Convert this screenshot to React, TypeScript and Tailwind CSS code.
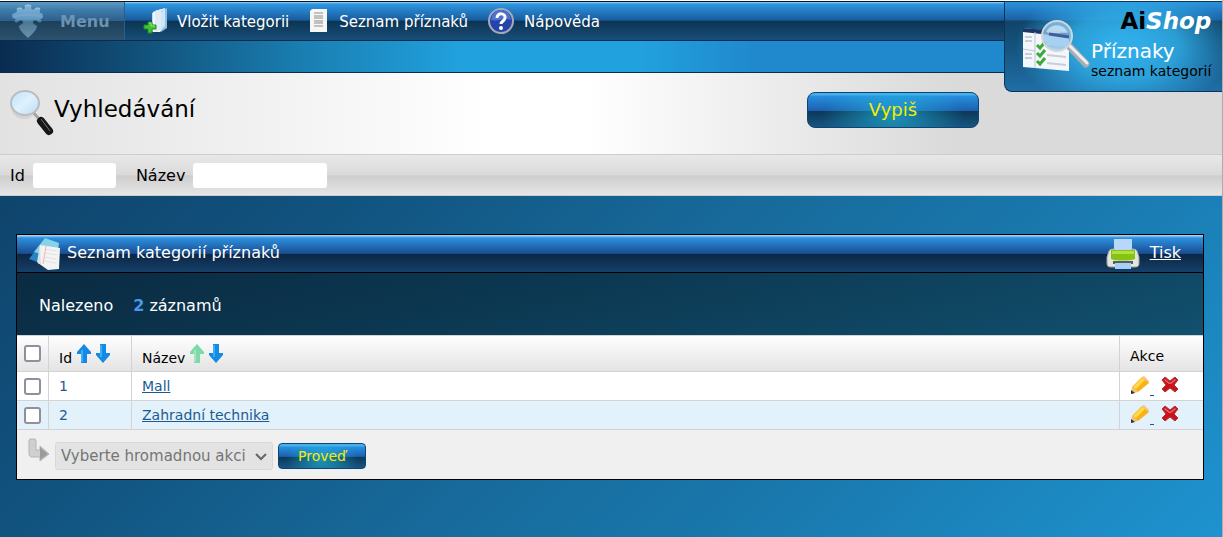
import type { ReactNode } from "react";

const rows = [
  { id: 1, name: "Mall" },
  { id: 2, name: "Zahradní technika" },
];

const glossy =
  "border border-[#0c4572] bg-[radial-gradient(ellipse_42%_100%_at_50%_65%,rgba(34,190,225,0.65),transparent),linear-gradient(to_bottom,#4aaeea_0,#4aaeea_2px,#2590df_3px,#1d5fae_52%,#0b3858_53%,#175582_100%)] text-[#f4ec00] cursor-pointer";

function PuzzleIcon() {
  return (
    <svg width="32" height="34" viewBox="0 0 32 34" className="shrink-0">
      <defs>
        <linearGradient id="puzzle" x1="0" y1="0" x2="0" y2="1">
          <stop offset="0" stopColor="#82b4d6" />
          <stop offset="0.45" stopColor="#6098c0" />
          <stop offset="0.52" stopColor="#4d7693" />
          <stop offset="1" stopColor="#6a92ae" />
        </linearGradient>
      </defs>
      <path
        d="M5 4c2-1 4-1 5 0 1 2 2 2 3 0 0-1-1-2 0-3 2-1 5-1 6 0 1 1 0 2 0 3 1 2 3 2 4 0 2-1 4-1 5 0 1 2-1 4 0 5 2 0 3 1 3 3s-1 3-3 3c1 1 2 2 1 3-2 1-3 0-4-1-1-2-4-1-4 1 0 3 3 2 4 4 0 4-5 8-9 12-4-4-9-8-9-12 1-2 4-1 4-4 0-2-3-3-4-1-1 1-2 2-4 1-1-1 0-2 1-3-2 0-4-1-4-3s1-3 3-3c3-1 1-3 2-5z"
        fill="url(#puzzle)"
      />
      <path d="M5 5c2-1 4-1 5 0M13 2c2-1 4-1 6 0M23 5c2-1 4-1 5 0" fill="none" stroke="#a4cae2" strokeOpacity="0.8" />
      <path d="M2 13c8-3 20-3 28 0" fill="none" stroke="#8bb6d3" strokeOpacity="0.3" strokeWidth="2" />
    </svg>
  );
}

function AddIcon() {
  return (
    <svg width="26" height="28" viewBox="0 0 26 28" className="shrink-0">
      <path d="M9 6l5-3v20l-5 2z" fill="#b9d9ee" />
      <path d="M10 5l12-4v19l-5 5h-7z" fill="#f2f7fb" />
      <path d="M12 4l6-2v21l-6 2z" fill="#dfebf4" />
      <path d="M18 4l6-3v20l-6 4z" fill="#8fbfe4" />
      <path d="M18 5l4-3v17l-4 4z" fill="#cfe5f5" />
      <path d="M5 15h4v3h4v4H9v4H5v-4H1v-4h4z" fill="#45c336" stroke="#1c8f1e" />
      <path d="M6 16h2v3h4" fill="none" stroke="#97e487" />
    </svg>
  );
}

function PageIcon() {
  return (
    <svg width="22" height="26" viewBox="0 0 22 26" className="shrink-0">
      <path d="M3 1h15v23H1V3z" fill="#f6f6f4" />
      <path d="M5 5h9M5 8h9M5 10h9M5 13h9M5 15h9M5 18h9" stroke="#8c8c8c" />
    </svg>
  );
}

function HelpIcon() {
  return (
    <svg width="28" height="28" viewBox="0 0 28 28" className="shrink-0">
      <circle cx="13" cy="14" r="12" fill="#2644a8" stroke="#a3aabb" strokeWidth="2" />
      <path d="M3 13a10 10 0 0 1 20 0c-6-3-13 2-20 0z" fill="#4f72cf" />
      <path d="M9 11c0-6 9-5 8 0 0 3-4 3-4 6" fill="none" stroke="#fff" strokeWidth="3" />
      <circle cx="13" cy="21" r="2" fill="#fff" />
    </svg>
  );
}

function MagnifierIcon() {
  return (
    <svg width="46" height="50" viewBox="0 0 46 50" className="shrink-0">
      <defs>
        <linearGradient id="lens" x1="0" y1="0" x2="1" y2="1">
          <stop offset="0" stopColor="#bfe2fa" />
          <stop offset="0.5" stopColor="#dff1fe" />
          <stop offset="1" stopColor="#b9dcf5" />
        </linearGradient>
      </defs>
      <ellipse cx="16" cy="18" rx="13" ry="12" fill="#c4c4c4" opacity="0.5" />
      <path d="M25 23l6 7" stroke="#a4a4a4" strokeWidth="3" />
      <path d="M33 32l8 10" stroke="#161616" strokeWidth="8" strokeLinecap="round" />
      <path d="M33 30l9 12" stroke="#777" strokeWidth="1" />
      <ellipse cx="17" cy="14" rx="14" ry="12" fill="url(#lens)" stroke="#b9bdc0" strokeWidth="2" />
    </svg>
  );
}

function ChecklistIcon() {
  return (
    <svg width="70" height="56" viewBox="0 0 70 56" className="shrink-0">
      <path d="M2 9l46 5v38L2 48z" fill="#f3f6fb" />
      <path d="M2 9l46 4v5L2 13z" fill="#1e3568" />
      <path d="M14 13v36M2 30l12 2" stroke="#bcc6d8" />
      <path d="M4 18h7M4 22h7M4 35h7M4 39h7M26 27l18 2M26 36l19 2M26 44l19 2" stroke="#c9ced6" strokeWidth="2" />
      <path d="M16 26l3 3 5-6M16 34l3 3 5-6M16 42l3 3 5-6" fill="none" stroke="#3ba935" strokeWidth="3" />
      <path d="M49 28l16 17" stroke="#a9adb3" strokeWidth="7" strokeLinecap="round" />
      <path d="M49 27l17 17" stroke="#eceef0" strokeWidth="3" strokeLinecap="round" />
      <circle cx="36" cy="17" r="15" fill="#8fc4ee" fillOpacity="0.75" stroke="#d3d6d8" strokeWidth="2" />
      <path d="M25 13c6-10 18-8 22 1-8-1-14 2-22-1z" fill="#fff" opacity="0.5" />
      <path d="M28 15l20 3" stroke="#3c5f9e" strokeWidth="3" />
    </svg>
  );
}

function NotesIcon() {
  return (
    <svg width="34" height="34" viewBox="0 0 34 34" className="shrink-0">
      <path d="M1 22L13 6l5 4-6 16z" fill="#2a82c6" />
      <path d="M6 15L17 1l14 5-2 15z" fill="#86d3e7" />
      <path d="M12 8l20 3-1 21-11 1-10-7z" fill="#f4f3f3" />
      <path d="M11 27l-2-2 3-17 1 19z" fill="#dcdfe3" />
      <path d="M17 12l12 2M17 16l12 2M16 20l12 2M16 24l12 2" stroke="#e2e2e6" />
      <path d="M18 9l-3 18" stroke="#efb4b4" />
    </svg>
  );
}

function PrinterIcon() {
  return (
    <svg width="34" height="34" viewBox="0 0 34 34" className="shrink-0">
      <path d="M8 2h18v13H8z" fill="#b7d8fa" />
      <path d="M3 14c1-2 3-2 5-2v3h18v-3c2 0 4 0 5 2l2 6v6c0 3-1 4-4 4H5c-3 0-4-1-4-4v-6z" fill="#e3e5e1" stroke="#9da29b" />
      <path d="M5 13h24v9c-4 2-20 2-24 0z" fill="#85c316" />
      <path d="M6 14h22v3H6z" fill="#b4e03e" />
      <path d="M7 24h20v3H7z" fill="#59605a" />
      <path d="M9 26h16v6H9z" fill="#a8d0f6" />
    </svg>
  );
}

function Arrow({ down, faded }: { down?: boolean; faded?: boolean }) {
  return (
    <svg width="15" height="20" viewBox="0 0 15 20" className="block">
      <path
        d={down ? "M4 0h6v9h4v2l-7 8-7-8V9h4z" : "M7 0l7 8v2h-4v9H4v-9H0V8z"}
        fill={faded ? "#7ddaa8" : "#1689e4"}
      />
      <path d={down ? "M5 1v12" : "M5 6v12"} stroke={faded ? "#a4e6c3" : "#38b0f4"} strokeWidth="2" />
    </svg>
  );
}

function SortHead({ label, faded }: { label: string; faded?: boolean }) {
  return (
    <div className="flex items-end gap-1 pt-1">
      <span className="mr-px">{label}</span>
      <a href="#" aria-label={`${label} vzestupně`} className="pb-1">
        <Arrow faded={faded} />
      </a>
      <a href="#" aria-label={`${label} sestupně`} className="pb-1">
        <Arrow down />
      </a>
    </div>
  );
}

function PencilIcon() {
  return (
    <svg width="20" height="20" viewBox="0 0 20 20" className="block">
      <path d="M1 18l1-7 6 5z" fill="#e9bf8a" />
      <path d="M1 18v-4l4 3z" fill="#333" />
      <path d="M2 11L12 1l7 6-11 9z" fill="#fbb014" />
      <path d="M3 11l9-9 3 2-9 9z" fill="#ffdc45" />
      <path d="M12 1l2-1 5 5v2z" fill="#f7c08c" />
    </svg>
  );
}

function DeleteIcon() {
  return (
    <svg width="18" height="18" viewBox="0 0 18 18" className="block">
      <path d="M1 4l3-3 5 4 5-4 3 3-4 5 4 4-3 3-5-4-5 4-3-3 4-4z" fill="#cc1118" stroke="#a8383c" />
      <path d="M3 4l1-1 5 4 5-4 1 1-5 4H8z" fill="#e36a6c" />
    </svg>
  );
}

function BulkIcon() {
  return (
    <svg width="22" height="24" viewBox="0 0 22 24" className="mb-3 shrink-0">
      <path d="M2 1h5l1 1v10h4V8l9 8-9 7v-4H3l-2-2V2z" fill="#cfcfcf" stroke="#b5b5b5" />
      <path d="M12 9l8 7-8 6z" fill="#9b9b9b" />
    </svg>
  );
}

function MenuLink({ icon, children }: { icon: ReactNode; children: ReactNode }) {
  return (
    <a href="#" className="flex items-center gap-2 text-[15px] text-white">
      {icon}
      <span className="pt-[2px]">{children}</span>
    </a>
  );
}

const box = "block size-[17px] appearance-none rounded-[3px] border-2 border-[#8f8f9d] bg-white";

export default function App() {
  return (
    <div className="min-h-screen border-r border-[#a9abad] bg-[linear-gradient(135deg,#0e3c62_0%,#11527e_30%,#176a9b_54%,#1976aa_70%,#1e93cf_100%)] font-['DejaVu_Sans',Verdana,sans-serif] text-black">
      <header className="relative border-t border-white">
        <nav className="flex h-10 items-center border-y border-t-[#06182b] border-b-[#0b2c4a] bg-[linear-gradient(to_bottom,#9bd3f8_0,#2e96e0_2px,#185b9f_48%,#0b3452_50%,#194e7a_100%)]">
          <button className="flex h-full w-[125px] items-center gap-4 border-r border-[#2a5f8c] bg-[linear-gradient(to_bottom,#5f9ac4_0,#3f7cab_20%,#2f5f8e_49%,#1d4058_50%,#2b526f_100%)] pl-3 text-base font-bold text-[#6b93b2]">
            <PuzzleIcon />
            <span className="pt-[2px]">Menu</span>
          </button>
          <div className="flex items-center gap-5 pl-[18px]">
            <MenuLink icon={<AddIcon />}>Vložit kategorii</MenuLink>
            <MenuLink icon={<PageIcon />}>Seznam příznaků</MenuLink>
            <MenuLink icon={<HelpIcon />}>Nápověda</MenuLink>
          </div>
        </nav>
        <div className="h-8 border-b border-[#0b2c4a] bg-[linear-gradient(to_right,#0a2b50,#125680_13%,#1a7fb2_25%,#21a2df_38%,#21a2df_52%,#2088cd_62%)]" />
        <div className="absolute top-0 right-0 flex h-[91px] w-[218px] items-center rounded-bl-lg border-t border-b border-l border-[#0b3558] bg-[radial-gradient(ellipse_50%_75%_at_55%_50%,#30ade8_15%,rgba(47,171,229,0.85)_50%,transparent_100%),linear-gradient(to_bottom,#2a94dc_0,#1b5fa4_18px,#104468_19px,#1f6ea6_100%)] pr-3 pl-4">
          <ChecklistIcon />
          <div className="flex-1 pb-2 text-right">
            <div className="text-[23px] leading-6 font-bold">
              Ai<i className="text-white">Shop</i>
            </div>
            <div className="mt-1 text-left text-xl leading-7 text-white">Příznaky</div>
            <div className="text-sm leading-3 whitespace-nowrap">seznam kategorií</div>
          </div>
        </div>
      </header>

      <form>
        <div className="flex h-[81px] items-center bg-[linear-gradient(to_right,#e2e2e2,#fff_40%,#fff_48%,#dadada_78%)] pl-2">
          <MagnifierIcon />
          <h1 className="flex-1 pb-2 text-[23px]">Vyhledávání</h1>
          <button type="button" className={`mr-[243px] mb-2 h-9 w-[172px] rounded-lg text-lg ${glossy}`}>
            Vypiš
          </button>
        </div>
        <div className="flex h-[42px] items-center border-y border-[#cdcdcd] bg-[linear-gradient(to_bottom,#e8e8e8,#dadada_50%,#cecece_52%,#e6e6e6)] pt-px pl-[10px] text-base">
          <label htmlFor="id">Id</label>
          <input id="id" className="ml-2 h-[25px] w-[83px] rounded-[3px] bg-white px-1" />
          <label htmlFor="name" className="ml-5">
            Název
          </label>
          <input id="name" className="ml-2 h-[25px] w-[134px] rounded-[3px] bg-white px-1" />
        </div>
      </form>

      <main className="mt-[38px] mr-[18px] ml-4 border border-black">
        <div className="flex h-[38px] items-center border-b border-black bg-[linear-gradient(to_bottom,#b7dcf8_0,#2d90df_3px,#184c91_50%,#0b2745_52%,#163f68_100%)] pr-[22px] pl-[11px] text-base text-white">
          <NotesIcon />
          <h2 className="ml-[5px] flex-1 pb-[2px]">Seznam kategorií příznaků</h2>
          <a href="#" className="flex items-center gap-[10px]">
            <PrinterIcon />
            <span className="pb-[2px] underline">Tisk</span>
          </a>
        </div>
        <p className="flex h-[62px] items-center bg-[linear-gradient(165deg,#0a2b42,#0c3750_40%,#11506e)] pt-[3px] pl-[22px] text-base text-white">
          Nalezeno <b className="mr-[5px] ml-5 text-[#4a98ee]">2</b> záznamů
        </p>
        <table className="w-full border-separate border-spacing-0 bg-white text-sm">
          <thead>
            <tr className="h-[37px] bg-linear-to-b from-white to-[#e3e3e3] text-left">
              <th className="w-8 border-y border-r border-[#d3d3d3] pl-[7px]">
                <input type="checkbox" aria-label="Vybrat vše" className={box} />
              </th>
              <th className="w-[83px] border-y border-r border-[#d3d3d3] pl-[10px] font-normal">
                <SortHead label="Id" />
              </th>
              <th className="border-y border-r border-[#d3d3d3] pl-[10px] font-normal">
                <SortHead label="Název" faded />
              </th>
              <th className="w-[83px] border-y border-[#d3d3d3] pt-1 pl-[10px] font-normal">Akce</th>
            </tr>
          </thead>
          <tbody className="text-[#1a5c92]">
            {rows.map((row) => (
              <tr key={row.id} className="h-[29px] even:bg-[#e3f1fb]">
                <td className="border-r border-b border-[#d3d3d3] pl-[7px]">
                  <input type="checkbox" aria-label={row.name} className={box} />
                </td>
                <td className="border-r border-b border-[#d3d3d3] pl-[10px]">{row.id}</td>
                <td className="border-r border-b border-[#d3d3d3] pl-[10px]">
                  <a href="#" className="underline">
                    {row.name}
                  </a>
                </td>
                <td className="border-b border-[#d3d3d3] pl-[10px]">
                  <div className="flex items-start gap-[7px]">
                    <a href="#" aria-label="Upravit" className="flex items-end">
                      <PencilIcon />
                      <span className="h-px w-1 bg-[#1a5c92]" />
                    </a>
                    <a href="#" aria-label="Smazat">
                      <DeleteIcon />
                    </a>
                  </div>
                </td>
              </tr>
            ))}
          </tbody>
        </table>
        <div className="flex h-[49px] items-center bg-[#f0f0f0] pt-[2px] pl-[11px]">
          <BulkIcon />
          <div className="relative ml-[5px]">
            <select
              disabled
              aria-label="Hromadná akce"
              className="block h-7 w-[218px] appearance-none rounded-[3px] border border-[#d8d8d8] bg-[#e3e3e3] pt-[2px] pl-[5px] text-[15px] text-[#757575] opacity-100"
            >
              <option>Vyberte hromadnou akci</option>
            </select>
            <svg width="12" height="8" viewBox="0 0 12 8" className="absolute top-[11px] right-[6px]">
              <path d="M1 1l5 5 5-5" fill="none" stroke="#666" strokeWidth="2" />
            </svg>
          </div>
          <button className={`ml-[5px] h-[26px] w-[88px] rounded text-sm ${glossy}`}>Proveď</button>
        </div>
      </main>
    </div>
  );
}
